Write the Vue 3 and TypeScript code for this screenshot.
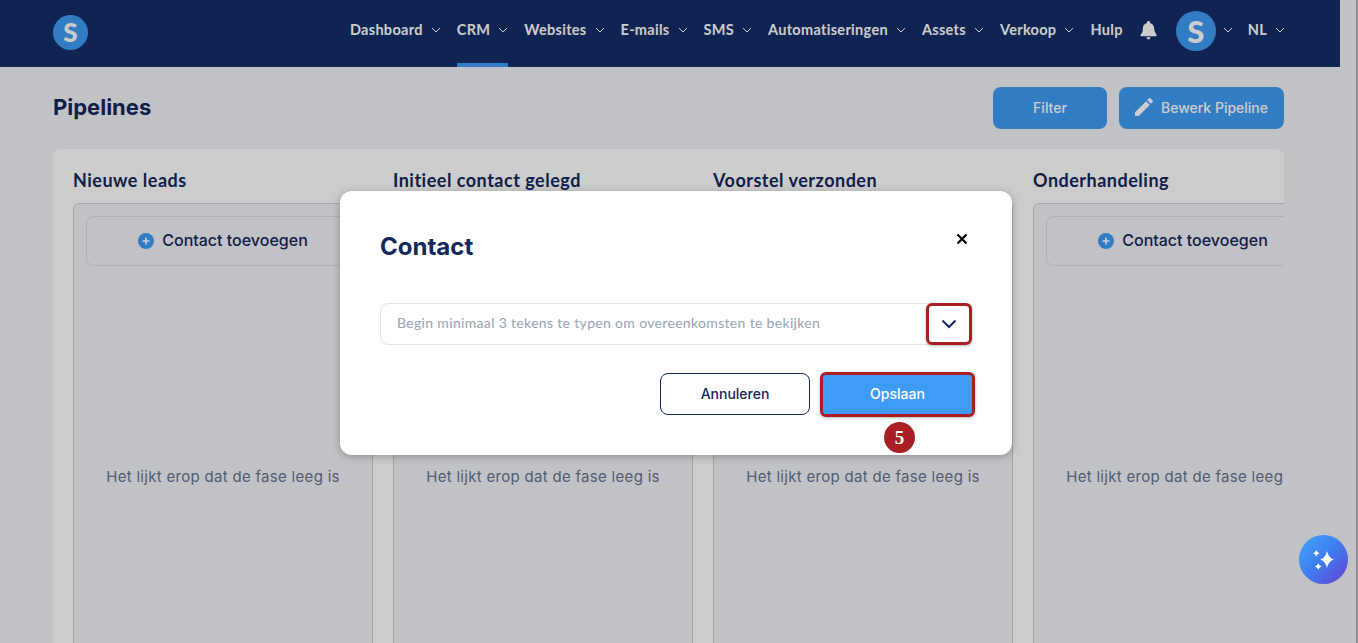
<script setup lang="ts">
interface NavItem {
  label: string;
  caret: boolean;
  active?: boolean;
}

const navItems: NavItem[] = [
  { label: 'Dashboard', caret: true },
  { label: 'CRM', caret: true, active: true },
  { label: 'Websites', caret: true },
  { label: 'E-mails', caret: true },
  { label: 'SMS', caret: true },
  { label: 'Automatiseringen', caret: true },
  { label: 'Assets', caret: true },
  { label: 'Verkoop', caret: true },
  { label: 'Hulp', caret: false },
];

const stages = ['Nieuwe leads', 'Initieel contact gelegd', 'Voorstel verzonden', 'Onderhandeling'];
</script>

<template>
  <div class="page">
    <header class="topbar">
      <div class="logo">S</div>
      <nav class="nav">
        <div v-for="item in navItems" :key="item.label" class="nav-item" :class="{ active: item.active }">
          <span>{{ item.label }}</span>
          <svg v-if="item.caret" class="caret" viewBox="0 0 10 6"><path d="M1 1l4 4 4-4" /></svg>
        </div>
        <svg class="bell" viewBox="0 0 18 20">
          <path d="M9 0c-1 0-1.6.7-1.6 1.6v.5C4.700 2.800 3 5 3 8c0 3.600-.9 5-2.400 6.500-.5.500-.2 1.500.6 1.500h15.600c.8 0 1.100-1 .6-1.500C16.900 13 15 11.600 15 8c0-3-1.700-5.200-4.400-5.900v-.5C10.600.7 10 0 9 0z" />
          <path d="M6.800 17.200h4.400C11 18.600 10.100 19.500 9 19.500s-2-.9-2.200-2.300z" />
        </svg>
        <div class="avatar">S</div>
        <svg class="caret avatar-caret" viewBox="0 0 10 6"><path d="M1 1l4 4 4-4" /></svg>
        <div class="nav-item lang">
          <span>NL</span>
          <svg class="caret" viewBox="0 0 10 6"><path d="M1 1l4 4 4-4" /></svg>
        </div>
      </nav>
    </header>

    <main class="content">
      <div class="title-row">
        <h1>Pipelines</h1>
        <div class="actions">
          <button class="btn filter"><span>Filter</span></button>
          <button class="btn edit">
            <svg viewBox="3 3 18 18" class="pencil">
              <path d="M3 17.250V21h3.750L17.810 9.940l-3.750-3.750L3 17.250zM20.710 7.040c.39-.39.39-1.020 0-1.410l-2.340-2.340c-.39-.39-1.020-.39-1.410 0l-1.830 1.830 3.750 3.750 1.830-1.830z" />
            </svg>
            <span>Bewerk Pipeline</span>
          </button>
        </div>
      </div>

      <section class="board">
        <div v-for="stage in stages" :key="stage" class="stage">
          <h2>{{ stage }}</h2>
          <div class="stage-box">
            <div class="add-contact">
              <svg class="plus" viewBox="0 0 16 16">
                <circle cx="8" cy="8" r="8" />
                <path d="M8 4.500v7M4.500 8h7" />
              </svg>
              Contact toevoegen
            </div>
            <div class="empty">Het lijkt erop dat de fase leeg is</div>
          </div>
        </div>
      </section>
    </main>

    <div class="overlay"></div>

    <div class="modal">
      <div class="modal-head">
        <h3>Contact</h3>
        <svg class="close" viewBox="0 0 12 12"><path d="M1.500 1.500l9 9M10.500 1.500l-9 9" /></svg>
      </div>
      <div class="select">
        <span class="placeholder">Begin minimaal 3 tekens te typen om overeenkomsten te bekijken</span>
        <div class="select-toggle">
          <svg viewBox="0 0 16 10"><path d="M1.500 1.500 8 8l6.500-6.500" /></svg>
        </div>
      </div>
      <div class="modal-actions">
        <button class="btn-cancel">Annuleren</button>
        <div class="save-wrap">
          <button class="btn-save">Opslaan</button>
          <div class="step">5</div>
        </div>
      </div>
    </div>

    <div class="spark">
      <svg viewBox="0 0 49 49">
        <path d="M28 16Q29.500 23 35 24.500 29.500 26 28 33 26.500 26 21 24.500 26.500 23 28 16z" />
        <path d="M17.300 15Q18 17.600 20.600 18.300 18 19 17.300 21.600 16.600 19 14 18.300 16.600 17.600 17.300 15z" />
        <path d="M19.300 28.200Q20 30.800 22.600 31.500 20 32.200 19.300 34.800 18.600 32.200 16 31.500 18.600 30.800 19.300 28.200z" />
      </svg>
    </div>
  </div>
</template>

<style>
html,
body {
  margin: 0;
  height: 100%;
  overflow: hidden;
  background: #c2c3c7;
}
</style>

<style scoped>
.page {
  position: relative;
  width: 1358px;
  height: 643px;
  overflow: hidden;
  background: #f2f3f8;
  font-family: Inter, 'Liberation Sans', sans-serif;
  color: #12275a;
  border-right: 2px solid #8e8f93;
  box-sizing: border-box;
}

.topbar {
  width: 1340px;
  height: 67px;
  box-sizing: border-box;
  padding: 0 55px 0 53px;
  display: flex;
  align-items: center;
  justify-content: space-between;
  background: #152d68;
}

.logo {
  width: 35px;
  height: 35px;
  margin-bottom: 2px;
  border-radius: 50%;
  background: #3f9cf6;
  color: #fff;
  font: 900 26px/35px Lato, 'Open Sans', sans-serif;
  text-align: center;
}

.nav {
  display: flex;
  align-items: center;
  height: 100%;
}

.nav-item {
  height: 100%;
  display: flex;
  align-items: center;
  gap: 8px;
  margin-right: 16px;
  position: relative;
  font: 700 14.5px Lato, sans-serif;
  letter-spacing: 0.3px;
  color: #fff;
  padding-bottom: 8px;
  box-sizing: border-box;
}

.nav-item.active::after {
  content: '';
  position: absolute;
  left: 0;
  right: 0;
  bottom: 0;
  height: 4px;
  background: #3f9cf6;
}

.caret {
  width: 10px;
  height: 6px;
  fill: none;
  stroke: #fff;
  stroke-width: 1;
}

.bell {
  width: 17px;
  height: 19px;
  fill: #fff;
  margin: 0 0 6px 1px;
}

.avatar {
  width: 40px;
  height: 40px;
  margin: 0 0 5px 19px;
  border-radius: 50%;
  background: #3f9cf6;
  color: #fff;
  font: 900 31px/40px Lato, sans-serif;
  text-align: center;
}

.avatar-caret {
  margin: 0 15px 8px 7px;
}

.nav-item.lang {
  margin-right: 0;
}

.content {
  width: 1340px;
  box-sizing: border-box;
  padding: 20px 56px 0 53px;
}

.title-row {
  display: flex;
  align-items: center;
  justify-content: space-between;
  height: 42px;
  margin-bottom: 20px;
}

h1 {
  margin: 0 0 2px;
  font-size: 22px;
  font-weight: 700;
}

.actions {
  display: flex;
  gap: 12px;
}

.btn {
  height: 42px;
  border: 0;
  border-radius: 8px;
  background: #3f9cf6;
  color: #fff;
  font: 500 14px Inter, sans-serif;
  display: flex;
  align-items: center;
  justify-content: center;
  padding: 0 0 2px;
}

.filter {
  width: 114px;
}

.edit {
  width: 165px;
  gap: 8px;
}

.pencil {
  width: 18px;
  height: 18px;
  fill: #fff;
}

.board {
  display: flex;
  gap: 20px;
  height: 520px;
  box-sizing: border-box;
  padding: 20px 0 0 20px;
  background: #fff;
  border-radius: 8px 8px 0 0;
  overflow: hidden;
}

.stage {
  flex: 0 0 300px;
}

h2 {
  margin: 0 0 12px;
  font: 700 18px/22px Lato, sans-serif;
  letter-spacing: 0.5px;
}

.stage-box {
  height: 480px;
  box-sizing: border-box;
  padding: 12px;
  border: 1px solid #cdd0da;
  border-radius: 6px;
  background: #f2f3f8;
  display: flex;
  flex-direction: column;
}

.add-contact {
  height: 50px;
  flex: none;
  box-sizing: border-box;
  border: 1px solid #dcdee6;
  border-radius: 8px;
  padding-bottom: 2px;
  display: flex;
  align-items: center;
  justify-content: center;
  gap: 8px;
  font-size: 16px;
  font-weight: 500;
}

.plus {
  width: 16px;
  height: 16px;
  margin-top: 2px;
  fill: #3f9cf6;
  stroke: #fff;
}

.plus circle {
  stroke: none;
}

.plus path {
  stroke-width: 1.6;
  fill: none;
}

.empty {
  margin-top: 201px;
  text-align: center;
  font-size: 15px;
  letter-spacing: 0.3px;
  color: #66728f;
  white-space: nowrap;
}

.overlay {
  position: absolute;
  inset: 0;
  background: rgba(0, 0, 0, 0.2);
}

.modal {
  position: absolute;
  left: 340px;
  top: 191px;
  width: 672px;
  height: 264px;
  box-sizing: border-box;
  padding: 40px;
  background: #fff;
  border-radius: 12px;
  box-shadow: 0 2px 8px rgba(0, 0, 0, 0.25);
}

.modal-head {
  display: flex;
  justify-content: space-between;
  align-items: flex-start;
  height: 72px;
}

h3 {
  margin: 0;
  font-size: 24px;
  font-weight: 700;
  line-height: 32px;
}

.close {
  width: 12px;
  height: 12px;
  margin: 2px 4px 0 0;
  fill: none;
  stroke: #000;
  stroke-width: 2.200;
}

.select {
  height: 42px;
  box-sizing: border-box;
  border: 1px solid #e4e6ea;
  border-radius: 8px;
  display: flex;
  align-items: center;
  justify-content: space-between;
  padding: 0 0 3px 16px;
  width: 592px;
  position: relative;
}

.placeholder {
  font: 400 14px Lato, sans-serif;
  letter-spacing: 0.33px;
  color: #98a2b3;
}

.select-toggle {
  position: absolute;
  right: -1px;
  top: -1px;
  width: 46px;
  height: 42px;
  box-sizing: border-box;
  border: 3px solid #a81e22;
  border-radius: 6px;
  display: flex;
  align-items: center;
  justify-content: center;
  box-shadow: 0 1px 3px rgba(0, 0, 0, 0.3);
}

.select-toggle svg {
  width: 16px;
  height: 10px;
  fill: none;
  stroke: #12275a;
  stroke-width: 2;
}

.modal-actions {
  display: flex;
  justify-content: flex-end;
  gap: 10px;
  margin-top: 27px;
  margin-right: -3px;
}

.btn-cancel {
  width: 150px;
  height: 42px;
  border: 1px solid #12275a;
  border-radius: 8px;
  background: #fff;
  color: #12275a;
  font: 500 14px Inter, sans-serif;
  margin-top: 1px;
  padding: 0 0 2px;
}

.save-wrap {
  position: relative;
}

.btn-save {
  width: 155px;
  height: 45px;
  box-sizing: border-box;
  border: 3px solid #a81e22;
  border-radius: 6px;
  background: #3f9cf6;
  color: #fff;
  font: 500 14px Inter, sans-serif;
  box-shadow: 0 1px 3px rgba(0, 0, 0, 0.3);
  display: block;
  padding: 0 0 2px;
}

.step {
  position: absolute;
  left: 64px;
  top: 50px;
  width: 31px;
  height: 31px;
  border-radius: 50%;
  background: #a81e22;
  color: #fff;
  font: 700 19px/31px 'Liberation Serif', serif;
  text-align: center;
}

.spark {
  position: absolute;
  left: 1299px;
  top: 535px;
  width: 49px;
  height: 49px;
  border-radius: 50%;
  background: linear-gradient(135deg, #3f9cf6 15%, #3f7bf0 50%, #6a3fd0 100%);
}

.spark svg {
  width: 49px;
  height: 49px;
  fill: #fff;
  display: block;
}
</style>
